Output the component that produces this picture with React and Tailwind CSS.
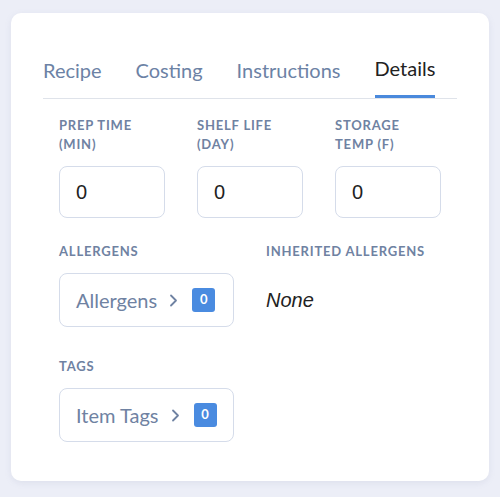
import { useState } from 'react';

const tabs = ['Recipe', 'Costing', 'Instructions', 'Details'];

function Label({ children }) {
  return (
    <div className="text-[13px] font-bold uppercase tracking-[0.8px] leading-[19px] text-[#6f82a2]">
      {children}
    </div>
  );
}

function Chevron() {
  return (
    <svg width="9" height="13" viewBox="0 0 9 13" fill="none" stroke="#6f82a2" strokeWidth="1.8" strokeLinecap="round" strokeLinejoin="round">
      <path d="M2 1.5l5 5-5 5" />
    </svg>
  );
}

function PickerButton({ text }) {
  return (
    <button className="flex h-[54px] w-full items-center rounded-lg border border-[#d5dcea] bg-white pl-4 text-left">
      <span className="text-[20px] text-[#6f82a2]">{text}</span>
      <span className="ml-3"><Chevron /></span>
      <span className="ml-[14px] flex h-6 w-[23px] items-center justify-center rounded-[3px] bg-[#4a8be0] text-[13px] font-bold text-white">
        0
      </span>
    </button>
  );
}

export default function App() {
  const [active, setActive] = useState('Details');
  const fields = [
    ['Prep Time', '(Min)'],
    ['Shelf Life', '(Day)'],
    ['Storage', 'Temp (F)'],
  ];

  return (
    <div className="min-h-[497px] bg-[#eceef7] px-[11px] pt-[13px]" style={{ fontFamily: 'Lato, "Open Sans", sans-serif' }}>
      <div className="h-[468px] rounded-[10px] bg-white px-8 pt-[39px] shadow-[0_2px_6px_rgba(140,150,180,0.15)]">
        {/* tabs */}
        <div className="flex gap-[34px] border-b border-[#dfe3ea]">
          {tabs.map((t) => (
            <button
              key={t}
              onClick={() => setActive(t)}
              className={`pb-[11px] text-[20px] leading-[32px] ${
                active === t ? 'border-b-[3px] border-[#4a89dc] pb-[8px] text-[#222]' : 'text-[#6c82a5]'
              }`}
            >
              {t}
            </button>
          ))}
        </div>

        <div className="px-4">
          <div className="mt-[17px] grid grid-cols-3 gap-x-8">
            {fields.map(([a, b]) => (
              <div key={a}>
                <Label>{a}<br />{b}</Label>
                <input
                  defaultValue="0"
                  className="mt-3 h-[52px] w-full rounded-lg border border-[#d5dcea] px-4 text-[20px] text-[#222] outline-none"
                  style={{ fontFamily: '"Liberation Sans", Arial, sans-serif' }}
                />
              </div>
            ))}
          </div>

          <div className="mt-[24px] grid grid-cols-2 gap-x-8">
            <div>
              <Label>Allergens</Label>
              <div className="mt-3"><PickerButton text="Allergens" /></div>
            </div>
            <div>
              <Label>Inherited Allergens</Label>
              <div className="mt-3 flex h-[54px] items-center text-[20px] italic text-[#222]" style={{ fontFamily: '"Liberation Sans", Arial, sans-serif' }}>
                None
              </div>
            </div>
          </div>

          <div className="mt-[30px] grid grid-cols-2 gap-x-8">
            <div>
              <Label>Tags</Label>
              <div className="mt-3"><PickerButton text="Item Tags" /></div>
            </div>
          </div>
        </div>
      </div>
    </div>
  );
}
